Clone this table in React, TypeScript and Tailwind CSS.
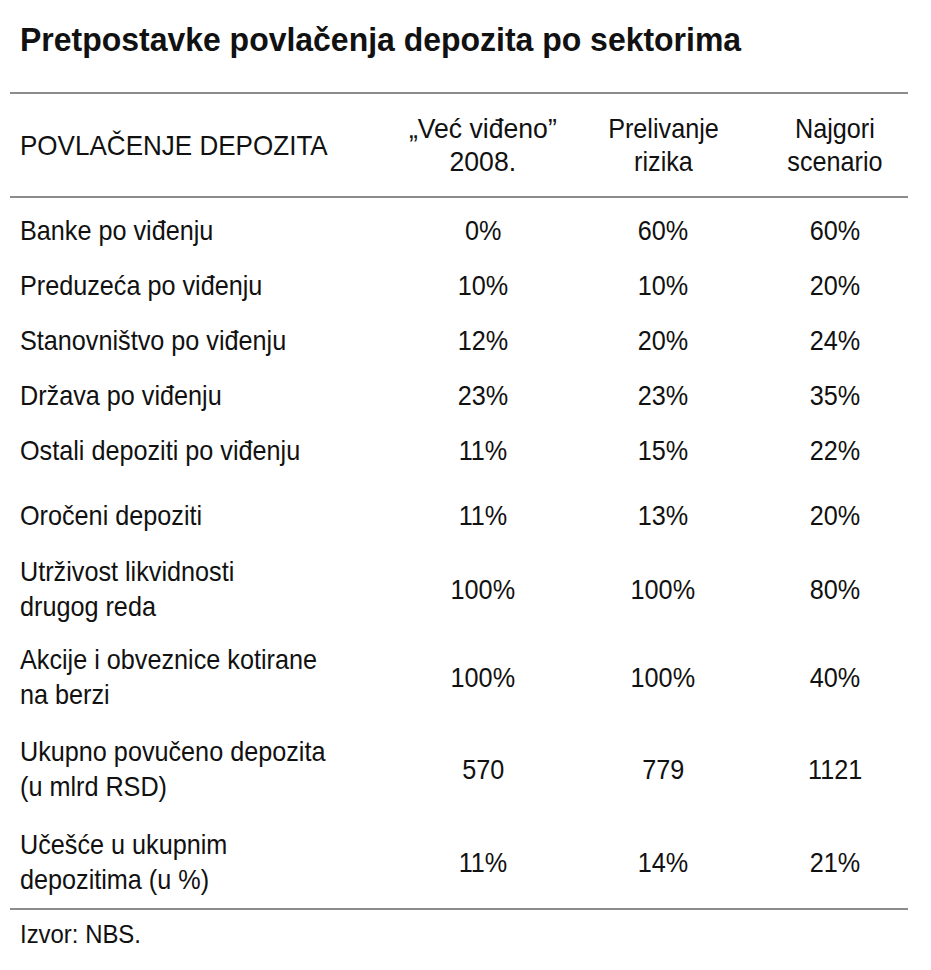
import React from 'react';

const rows = [
  { label: ['Banke po viđenju'], values: ['0%', '60%', '60%'], h: 'h-[55px]' },
  { label: ['Preduzeća po viđenju'], values: ['10%', '10%', '20%'], h: 'h-[55px]' },
  { label: ['Stanovništvo po viđenju'], values: ['12%', '20%', '24%'], h: 'h-[55px]' },
  { label: ['Država po viđenju'], values: ['23%', '23%', '35%'], h: 'h-[55px]' },
  { label: ['Ostali depoziti po viđenju'], values: ['11%', '15%', '22%'], h: 'h-[55px]' },
  { label: ['Oročeni depoziti'], values: ['11%', '13%', '20%'], h: 'h-[74px]' },
  { label: ['Utrživost likvidnosti', 'drugog reda'], values: ['100%', '100%', '80%'], h: 'h-[74px]' },
  { label: ['Akcije i obveznice kotirane', 'na berzi'], values: ['100%', '100%', '40%'], h: 'h-[102px]' },
  { label: ['Ukupno povučeno depozita', '(u mlrd RSD)'], values: ['570', '779', '1121'], h: 'h-[82px]' },
  { label: ['Učešće u ukupnim', 'depozitima (u %)'], values: ['11%', '14%', '21%'], h: 'h-[98px] pt-[6px]' },
];

const cols = 'grid grid-cols-[385px_176px_184px_153px] items-center';

// condensed look: the source uses a narrow grotesque, so squeeze Liberation Sans a little
const Narrow = ({ children, left }: { children: React.ReactNode; left?: boolean }) => (
  <span className={`inline-block scale-x-90 ${left ? 'origin-left' : 'origin-center'}`}>{children}</span>
);

export default function App() {
  return (
    <div className="w-[931px] h-[970px] bg-white text-[#111] font-['Liberation_Sans',Arial,sans-serif]">
      <h1 className="pl-[20px] pt-[19px] h-[92px] text-[34px] font-bold leading-[40px]">
        <span className="inline-block origin-left scale-x-[0.94] whitespace-nowrap">
          Pretpostavke povlačenja depozita po sektorima
        </span>
      </h1>

      <div className="ml-[10px] w-[898px]">
        <div className="h-[2px] bg-[#8c8c8c]" />
        <div className={`${cols} h-[102px] text-[28px] leading-[33px]`}>
          <div className="pl-[10px] whitespace-nowrap">
            <span className="inline-block origin-left scale-x-[0.93]">POVLAČENJE DEPOZITA</span>
          </div>
          <div className="text-center">
            <span className="inline-block scale-x-[0.95]">„Već viđeno”<br />2008.</span>
          </div>
          <div className="text-center">
            <Narrow>Prelivanje<br />rizika</Narrow>
          </div>
          <div className="text-center pl-[6px]">
            <Narrow>Najgori<br />scenario</Narrow>
          </div>
        </div>
        <div className="h-[2px] bg-[#8c8c8c]" />

        <div className="pt-[5px]">
          {rows.map((row, i) => (
            <div key={i} className={`${cols} text-[28px] leading-[35px] ${row.h}`}>
              <div className="pl-[10px] whitespace-nowrap">
                <Narrow left>
                  {row.label.map((l, j) => (
                    <div key={j}>{l}</div>
                  ))}
                </Narrow>
              </div>
              {row.values.map((v, j) => (
                <div key={j} className={j === 2 ? 'text-center pl-[8px]' : 'text-center'}>
                  <Narrow>{v}</Narrow>
                </div>
              ))}
            </div>
          ))}
        </div>
        <div className="h-[2px] bg-[#8c8c8c]" />
        <div className="pl-[10px] pt-[8px] text-[26px] leading-[32px]">
          <span className="inline-block origin-left scale-x-[0.92]">Izvor: NBS.</span>
        </div>
      </div>
    </div>
  );
}
